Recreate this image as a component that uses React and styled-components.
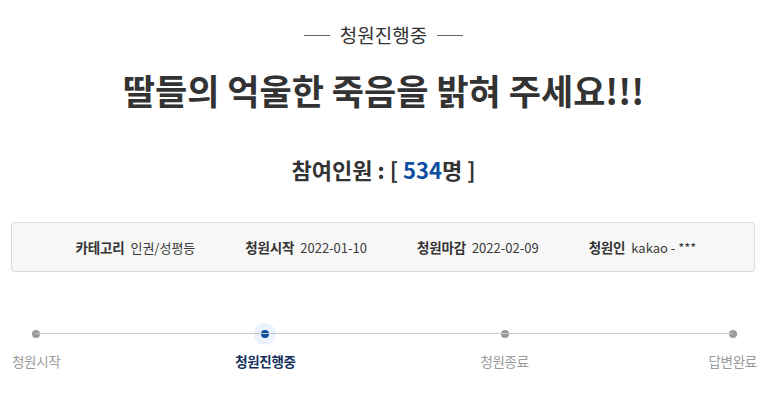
import React from "react";
import styled, { createGlobalStyle } from "styled-components";

const GlobalStyle = createGlobalStyle`
  body {
    margin: 0;
    background: #fff;
    font-family: "Noto Sans CJK KR", "Noto Sans", sans-serif;
    color: #333;
  }
`;

const Page = styled.div`
  width: 767px;
  padding-top: 22px;
`;

const Status = styled.div`
  display: flex;
  justify-content: center;
  align-items: center;
  gap: 10px;
  font-size: 19px;
  line-height: 26px;
  color: #333;
  &::before,
  &::after {
    content: "";
    width: 26px;
    height: 1px;
    background: #666;
  }
`;

const Title = styled.h1`
  margin: 18px 0 0;
  text-align: center;
  font-size: 35px;
  line-height: 48px;
  font-weight: 700;
  color: #333;
`;

const Count = styled.div`
  margin-top: 40px;
  text-align: center;
  font-size: 22px;
  line-height: 30px;
  font-weight: 700;
  color: #333;
`;

const Num = styled.span`
  color: #0b4ea2;
`;

const InfoBox = styled.div`
  margin: 38px 12px 0 11px;
  height: 48px;
  border: 1px solid #dcdcdc;
  border-radius: 3px;
  background: #f7f7f7;
  display: flex;
  justify-content: center;
  align-items: center;
  gap: 50px;
  padding-left: 6px;
`;

const Item = styled.div`
  display: flex;
  align-items: baseline;
  gap: 6px;
`;

const Label = styled.span`
  font-size: 13.5px;
  letter-spacing: -0.2px;
  font-weight: 700;
  color: #333;
`;

const Value = styled.span`
  font-size: 13px;
  color: #3a3a3a;
`;

const Steps = styled.ol`
  list-style: none;
  margin: 51px 10px 0 12px;
  padding: 0;
  display: flex;
  justify-content: space-between;
  position: relative;
  &::before {
    content: "";
    position: absolute;
    left: 24px;
    right: 24px;
    top: 10px;
    height: 1px;
    background: #c8c8c8;
  }
`;

const Step = styled.li`
  display: flex;
  flex-direction: column;
  align-items: center;
  margin: ${(p) => (p.$active ? "0 5px 0 -5px" : "0")};
`;

const DotWrap = styled.div`
  width: 22px;
  height: 22px;
  border-radius: 50%;
  display: flex;
  justify-content: center;
  align-items: center;
  background: ${(p) => (p.$active ? "#eaf3fd" : "transparent")};
`;

const Dot = styled.span`
  width: 8px;
  height: 8px;
  border-radius: 50%;
  background: ${(p) => (p.$active ? "#0b4ea2" : "#9a9a9a")};
`;

const StepName = styled.span`
  margin-top: 7px;
  font-size: 13.5px;
  line-height: 18px;
  letter-spacing: -0.3px;
  font-weight: ${(p) => (p.$active ? 700 : 400)};
  color: ${(p) => (p.$active ? "#14315f" : "#9a9a9a")};
`;

const info = [
  ["카테고리", "인권/성평등"],
  ["청원시작", "2022-01-10"],
  ["청원마감", "2022-02-09"],
  ["청원인", "kakao - ***"],
];

const steps = [
  ["청원시작", false],
  ["청원진행중", true],
  ["청원종료", false],
  ["답변완료", false],
];

export default function App() {
  return (
    <Page>
      <GlobalStyle />
      <Status>청원진행중</Status>
      <Title>딸들의 억울한 죽음을 밝혀 주세요!!!</Title>
      <Count>
        참여인원 : [ <Num>534</Num>명 ]
      </Count>
      <InfoBox>
        {info.map(([k, v]) => (
          <Item key={k}>
            <Label>{k}</Label>
            <Value>{v}</Value>
          </Item>
        ))}
      </InfoBox>
      <Steps>
        {steps.map(([name, active]) => (
          <Step key={name} $active={active}>
            <DotWrap $active={active}>
              <Dot $active={active} />
            </DotWrap>
            <StepName $active={active}>{name}</StepName>
          </Step>
        ))}
      </Steps>
    </Page>
  );
}
